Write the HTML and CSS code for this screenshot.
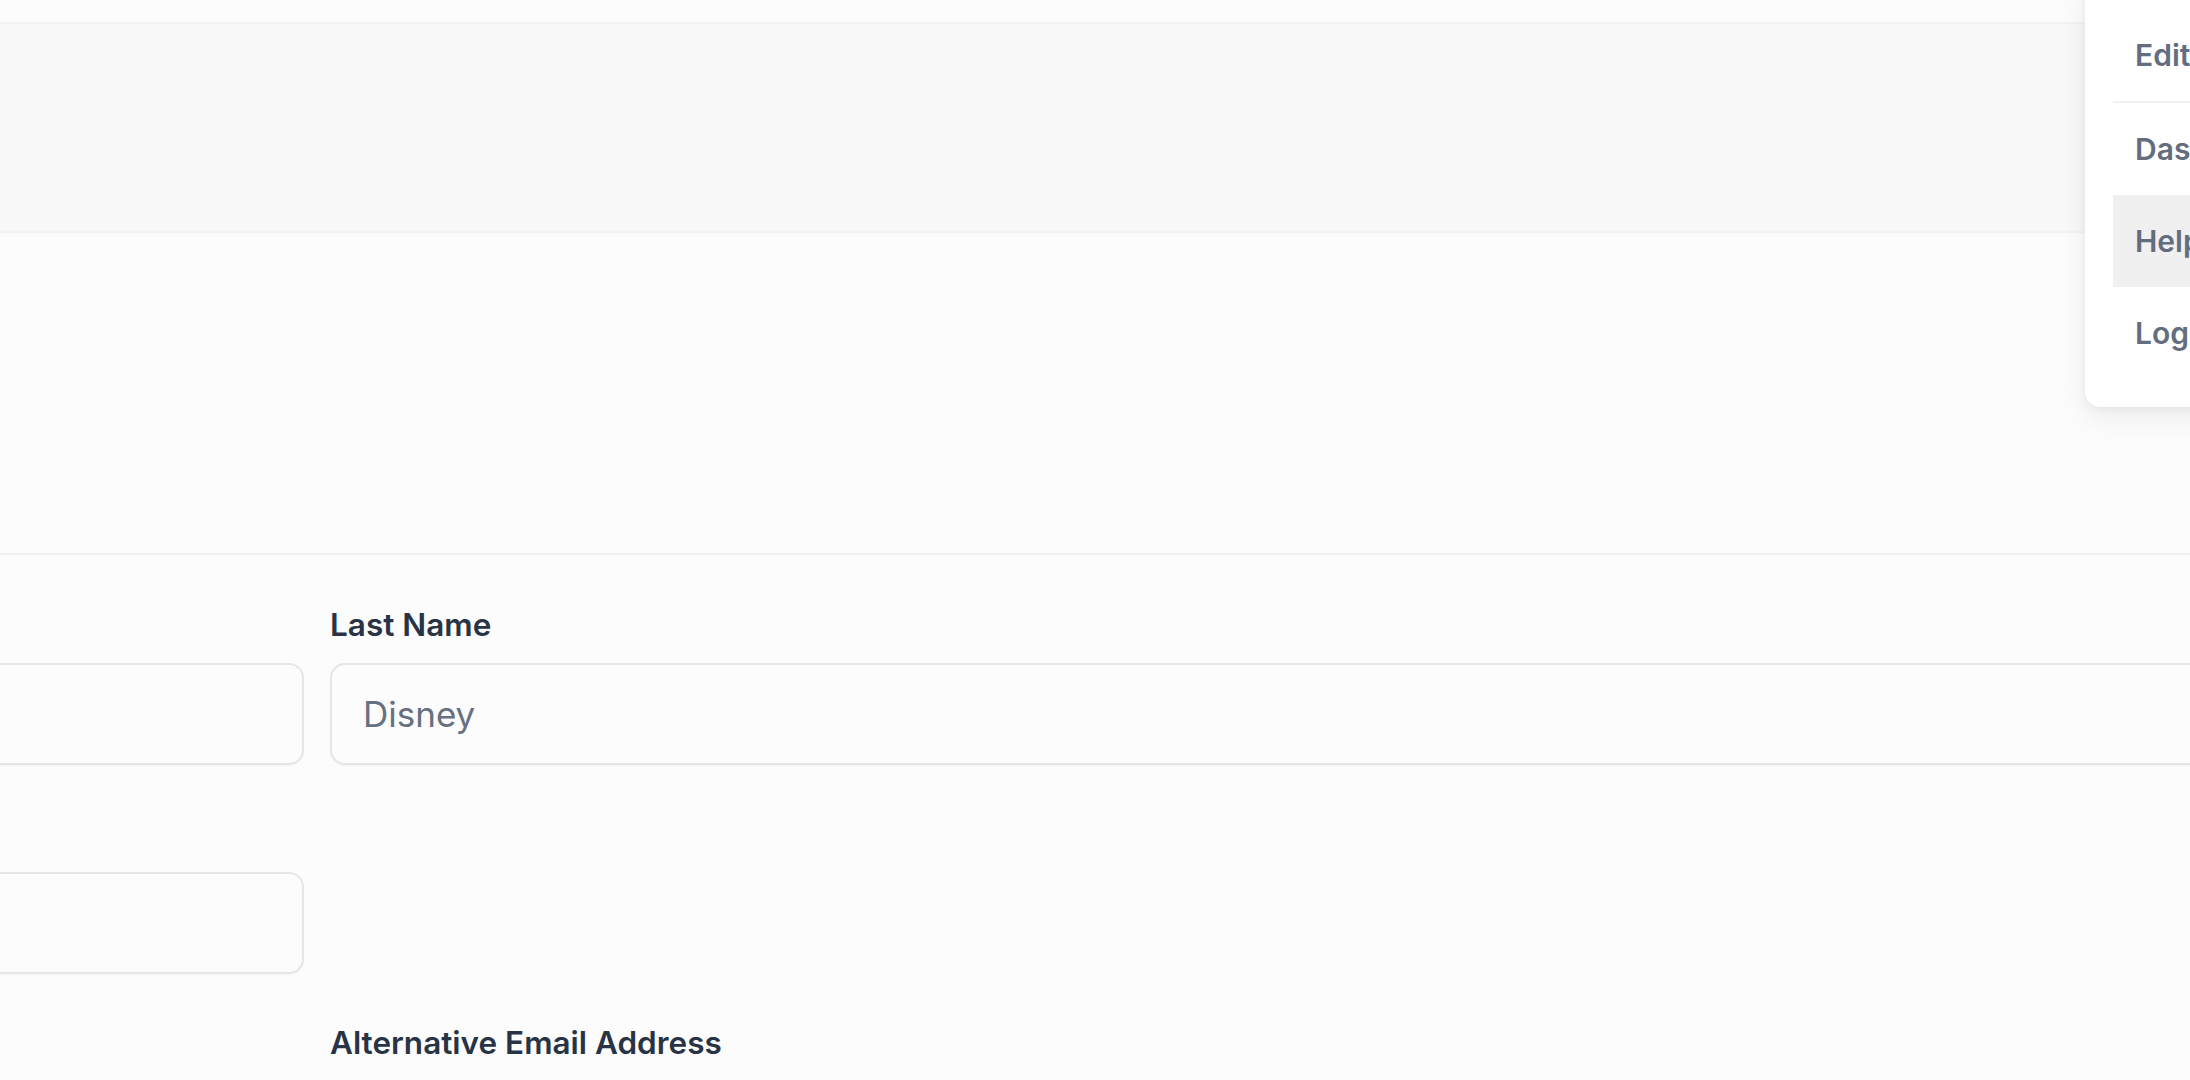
FILE: index.html
```html
<!DOCTYPE html>
<html lang="en">
<head>
<meta charset="UTF-8">
<meta name="viewport" content="width=device-width, initial-scale=1.0">
<title>Profile Settings</title>
<link rel="stylesheet" href="styles.css">
</head>
<body>

<!-- Top strip and page header band -->
<div class="topbar"></div>
<header class="page-header"></header>

<main class="page">
  <div class="page-intro"></div>

  <!-- Profile form -->
  <section class="form-section">
    <form class="form-grid" id="profileForm">
      <div class="field">
        <label class="field-label" for="firstName">First Name</label>
        <input class="field-input" type="text" id="firstName" name="firstName" value="Walt">
      </div>
      <div class="field">
        <label class="field-label" for="lastName">Last Name</label>
        <input class="field-input" type="text" id="lastName" name="lastName" value="Disney">
      </div>
      <div class="field">
        <label class="field-label" for="email">Email Address</label>
        <input class="field-input" type="email" id="email" name="email" value="walt@disney.com">
      </div>
      <div class="field field-empty"></div>
      <div class="field field-empty"></div>
      <div class="field">
        <label class="field-label" for="altEmail">Alternative Email Address</label>
        <input class="field-input" type="email" id="altEmail" name="altEmail">
      </div>
    </form>
  </section>
</main>

<!-- User menu (open) -->
<div class="user-menu">
  <a class="menu-item" href="#">Edit Profile</a>
  <div class="menu-divider"></div>
  <a class="menu-item" href="#">Dashboard</a>
  <a class="menu-item active" href="#">Help</a>
  <a class="menu-item" href="#">Log out</a>
</div>

</body>
</html>
```

FILE: styles.css
```css
/* Base */
html, body {
  margin: 0;
  padding: 0;
}

body {
  background-color: #fcfcfc;
  font-family: Inter, "Noto Sans", "Liberation Sans", sans-serif;
  overflow: hidden;
  height: 1080px;
  position: relative;
}

/* Header band */
.topbar {
  height: 22px;
}

.page-header {
  height: 207px;
  background-color: #f8f8f8;
  border-top: 2px solid #f3f3f3;
  border-bottom: 2px solid #f3f3f3;
}

.page-intro {
  height: 320px;
}

/* Form */
.form-section {
  border-top: 2px solid #f1f1f1;
  padding-top: 48px;
}

.form-grid {
  display: grid;
  grid-template-columns: 1900px 1900px;
  column-gap: 26px;
  row-gap: 47px;
  margin-left: -1596px;
}

.field {
  display: flex;
  flex-direction: column;
}

.field-empty {
  height: 162px;
}

.field-label {
  font-size: 31.5px;
  line-height: 44px;
  font-weight: 600;
  color: #283445;
  margin-bottom: 16px;
}

.field-input {
  height: 102px;
  box-sizing: border-box;
  border: 2px solid #e6e6e6;
  border-radius: 15px;
  background-color: #fcfcfc;
  box-shadow: 0 1px 2px rgba(0,0,0,0.04);
  padding: 0 31px;
  font-family: Inter, "Liberation Sans", sans-serif;
  font-size: 35px;
  color: #667080;
  outline: none;
}

/* User menu */
.user-menu {
  position: absolute;
  top: -19px;
  left: 2085px;
  width: 320px;
  padding: 28px;
  background-color: #ffffff;
  border-radius: 15px;
  box-shadow: 0 10px 28px rgba(0,0,0,0.07), 0 2px 8px rgba(0,0,0,0.05);
  box-sizing: border-box;
}

.menu-item {
  display: block;
  height: 92px;
  line-height: 92px;
  padding-left: 22px;
  font-size: 30px;
  font-weight: 600;
  color: #636d7e;
  text-decoration: none;
  white-space: nowrap;
}

.menu-item.active {
  background-color: #f0f0f0;
}

.menu-divider {
  height: 2px;
  background-color: #f0f0f0;
}
```
